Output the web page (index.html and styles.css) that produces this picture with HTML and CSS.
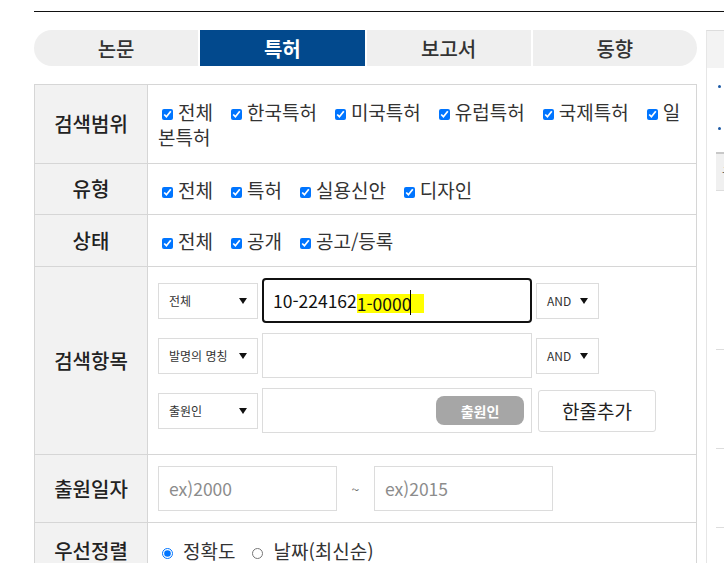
FILE: index.html
```html
<!DOCTYPE html>
<html lang="ko">
<head>
<meta charset="utf-8">
<title>특허 검색</title>
<link rel="stylesheet" href="styles.css">
</head>
<body>
<div class="page">
  <div class="rule"></div>
  <div class="layout">
    <div class="main">
      <ul class="tabs">
        <li class="tab first">논문</li>
        <li class="tab active">특허</li>
        <li class="tab">보고서</li>
        <li class="tab last">동향</li>
      </ul>
      <div class="form">
        <div class="lab">검색범위</div>
        <div class="val">
          <div class="checks"><label class="chk"><input type="checkbox" checked>전체</label><label class="chk"><input type="checkbox" checked>한국특허</label><label class="chk"><input type="checkbox" checked>미국특허</label><label class="chk"><input type="checkbox" checked>유럽특허</label><label class="chk"><input type="checkbox" checked>국제특허</label><label class="chk"><input type="checkbox" checked>일본특허</label></div>
        </div>

        <div class="lab">유형</div>
        <div class="val">
          <div class="checks"><label class="chk"><input type="checkbox" checked>전체</label><label class="chk"><input type="checkbox" checked>특허</label><label class="chk"><input type="checkbox" checked>실용신안</label><label class="chk"><input type="checkbox" checked>디자인</label></div>
        </div>

        <div class="lab">상태</div>
        <div class="val">
          <div class="checks"><label class="chk"><input type="checkbox" checked>전체</label><label class="chk"><input type="checkbox" checked>공개</label><label class="chk"><input type="checkbox" checked>공고/등록</label></div>
        </div>

        <div class="lab">검색항목</div>
        <div class="val items">
          <div class="srow">
            <div class="sel"><span>전체</span><svg class="arr" width="8" height="6" viewBox="0 0 8 6"><polygon points="0,0 8,0 4,6"/></svg></div>
            <div class="field focus"><span class="typed">10-224162<span class="hl">1-0000<span class="caret"></span></span></span></div>
            <div class="sel op"><span>AND</span><svg class="arr" width="8" height="6" viewBox="0 0 8 6"><polygon points="0,0 8,0 4,6"/></svg></div>
          </div>
          <div class="srow">
            <div class="sel"><span>발명의 명칭</span><svg class="arr" width="8" height="6" viewBox="0 0 8 6"><polygon points="0,0 8,0 4,6"/></svg></div>
            <div class="field"></div>
            <div class="sel op"><span>AND</span><svg class="arr" width="8" height="6" viewBox="0 0 8 6"><polygon points="0,0 8,0 4,6"/></svg></div>
          </div>
          <div class="srow">
            <div class="sel"><span>출원인</span><svg class="arr" width="8" height="6" viewBox="0 0 8 6"><polygon points="0,0 8,0 4,6"/></svg></div>
            <div class="field withbtn"><button class="pill" type="button">출원인</button></div>
            <button class="addrow" type="button">한줄추가</button>
          </div>
        </div>

        <div class="lab">출원일자</div>
        <div class="val">
          <input class="date" type="text" placeholder="ex)2000">
          <span class="tilde">~</span>
          <input class="date" type="text" placeholder="ex)2015">
        </div>

        <div class="lab">우선정렬</div>
        <div class="val">
          <div class="radios"><label class="rad"><input type="radio" name="sort" checked>정확도</label><label class="rad"><input type="radio" name="sort">날짜(최신순)</label></div>
        </div>
      </div>
    </div>

    <div class="side">
      <div class="side-head"></div>
      <ul class="tips">
        <li>검색어 입력 후 검색 버튼을 누르세요.</li>
        <li>번호 검색은 하이픈을 포함하여 입력합니다.</li>
      </ul>
      <div class="side-table">
        <div class="sth">구분</div>
        <div class="str r1"></div>
        <div class="str r2"></div>
        <div class="str r3"></div>
      </div>
    </div>
  </div>
</div>
</body>
</html>
```

FILE: styles.css
```css
html, body {
  margin: 0;
  padding: 0;
  overflow: hidden;
  background: #fff;
}

body {
  font-family: "Noto Sans CJK KR", "Noto Sans", sans-serif;
  color: #333;
  width: 724px;
  height: 563px;
}

.page {
  padding: 11px 0 0 34px;
}

.rule {
  height: 1px;
  background: #111;
}

.layout {
  display: flex;
  align-items: flex-start;
  margin-top: 18px;
}

.main {
  width: 663px;
  flex-shrink: 0;
}

/* tabs */
.tabs {
  list-style: none;
  margin: 0;
  padding: 0;
  display: flex;
  gap: 2px;
  height: 36px;
}

.tab {
  flex: 1;
  background: #efefef;
  display: flex;
  align-items: center;
  justify-content: center;
  font-size: 20px;
  font-weight: 500;
  color: #333;
}

.tab.first { border-radius: 18px 0 0 18px; }
.tab.last { border-radius: 0 18px 18px 0; }

.tab.active {
  background: #02498d;
  color: #fff;
  font-weight: 700;
}

/* form grid */
.form {
  margin-top: 18px;
  border: 1px solid #d6d6d6;
  border-bottom: 0;
  display: grid;
  grid-template-columns: 113px 1fr;
  grid-template-rows: 79px 51px 52px 188px 68px 56px;
}

.lab {
  background: #f2f2f2;
  border-right: 1px solid #d6d6d6;
  border-bottom: 1px solid #d6d6d6;
  display: flex;
  align-items: center;
  justify-content: center;
  font-size: 20px;
  line-height: 24px;
  font-weight: 500;
  color: #222;
}

.val {
  border-bottom: 1px solid #d6d6d6;
  padding: 0 10px;
  display: flex;
  align-items: center;
  font-size: 19px;
  color: #333;
  min-width: 0;
}

.checks {
  line-height: 25px;
}

.chk {
  margin-right: 14px;
}

.chk input {
  width: 11px;
  height: 11px;
  margin: 0 5px 0 4px;
  vertical-align: 0;
}

/* search items */
.val.items {
  flex-direction: column;
  align-items: flex-start;
  padding-top: 11px;
}

.srow {
  display: flex;
  align-items: center;
  gap: 4px;
  height: 45px;
  margin-bottom: 10px;
}

.sel {
  width: 100px;
  height: 36px;
  box-sizing: border-box;
  border: 1px solid #dcdcdc;
  display: flex;
  align-items: center;
  justify-content: space-between;
  padding: 0 10px 0 10px;
  font-size: 12px;
  color: #333;
  background: #fff;
}

.sel.op {
  width: 63px;
}

.arr {
  fill: #111;
  flex-shrink: 0;
}

.field {
  width: 270px;
  height: 45px;
  box-sizing: border-box;
  border: 1px solid #dcdcdc;
  display: flex;
  align-items: center;
  background: #fff;
}

.field.focus {
  border: 2px solid #111;
  border-radius: 4px;
  padding-left: 9px;
  font-size: 17.5px;
  color: #111;
}

.typed {
  white-space: nowrap;
}

.hl {
  position: relative;
  display: inline-block;
  background: #ffff00;
  padding-right: 13px;
  line-height: 19px;
  height: 19px;
  vertical-align: middle;
}

.caret {
  position: absolute;
  right: 13px;
  top: -4px;
  width: 1px;
  height: 25px;
  background: #000;
}

.field.withbtn {
  justify-content: flex-end;
  padding-right: 7px;
}

.pill {
  width: 88px;
  height: 29px;
  border: 0;
  border-radius: 8px;
  background: #a6a6a6;
  color: #fff;
  font-family: "Noto Sans CJK KR", sans-serif;
  font-size: 14px;
  font-weight: 700;
  padding: 0;
}

.addrow {
  margin-left: 2px;
  width: 118px;
  height: 42px;
  border: 1px solid #dcdcdc;
  border-radius: 3px;
  background: #fff;
  font-family: "Noto Sans CJK KR", sans-serif;
  font-size: 19px;
  color: #222;
  padding: 0;
}

/* dates */
.date {
  width: 179px;
  height: 45px;
  box-sizing: border-box;
  border: 1px solid #dcdcdc;
  padding: 0 10px;
  font-family: "Noto Sans CJK KR", "Noto Sans", sans-serif;
  font-size: 17.5px;
  color: #333;
  margin: 0;
}

.date::placeholder {
  color: #8c8c8c;
}

.tilde {
  width: 37px;
  text-align: center;
  font-size: 14px;
  color: #666;
}

/* radios */
.radios {
  line-height: 20px;
}

.rad {
  margin-right: 13px;
}

.rad input {
  width: 11px;
  height: 11px;
  margin: 0 10px 0 4px;
  vertical-align: 0;
}

/* side panel */
.side {
  width: 300px;
  flex-shrink: 0;
  margin-left: 9px;
  border-top: 1px solid #dddddd;
  border-left: 1px solid #e6e6e6;
  height: 560px;
}

.side-head {
  height: 37px;
  background: #f3f3f3;
}

.tips {
  list-style: none;
  margin: 8px 0 0;
  padding: 0 0 0 9px;
  font-size: 14px;
  line-height: 21px;
}

.tips li {
  position: relative;
  padding-left: 12px;
  white-space: nowrap;
}

.tips li + li {
  margin-top: 21px;
}

.tips li::before {
  content: "";
  position: absolute;
  left: 2px;
  top: 9px;
  width: 3px;
  height: 3px;
  border-radius: 50%;
  background: #1d5aa6;
}

.side-table {
  margin: 13px 0 0 9px;
}

.sth {
  height: 39px;
  box-sizing: border-box;
  border-top: 2px solid #c8c8c8;
  border-bottom: 1px solid #dddddd;
  background: #f0f0f0;
  padding-left: 6px;
  line-height: 36px;
  font-size: 13px;
  color: #666;
}

.str {
  box-sizing: border-box;
  border-bottom: 1px solid #dddddd;
}

.str.r1 { height: 159px; }
.str.r2 { height: 99px; }
.str.r3 { height: 79px; }
```
